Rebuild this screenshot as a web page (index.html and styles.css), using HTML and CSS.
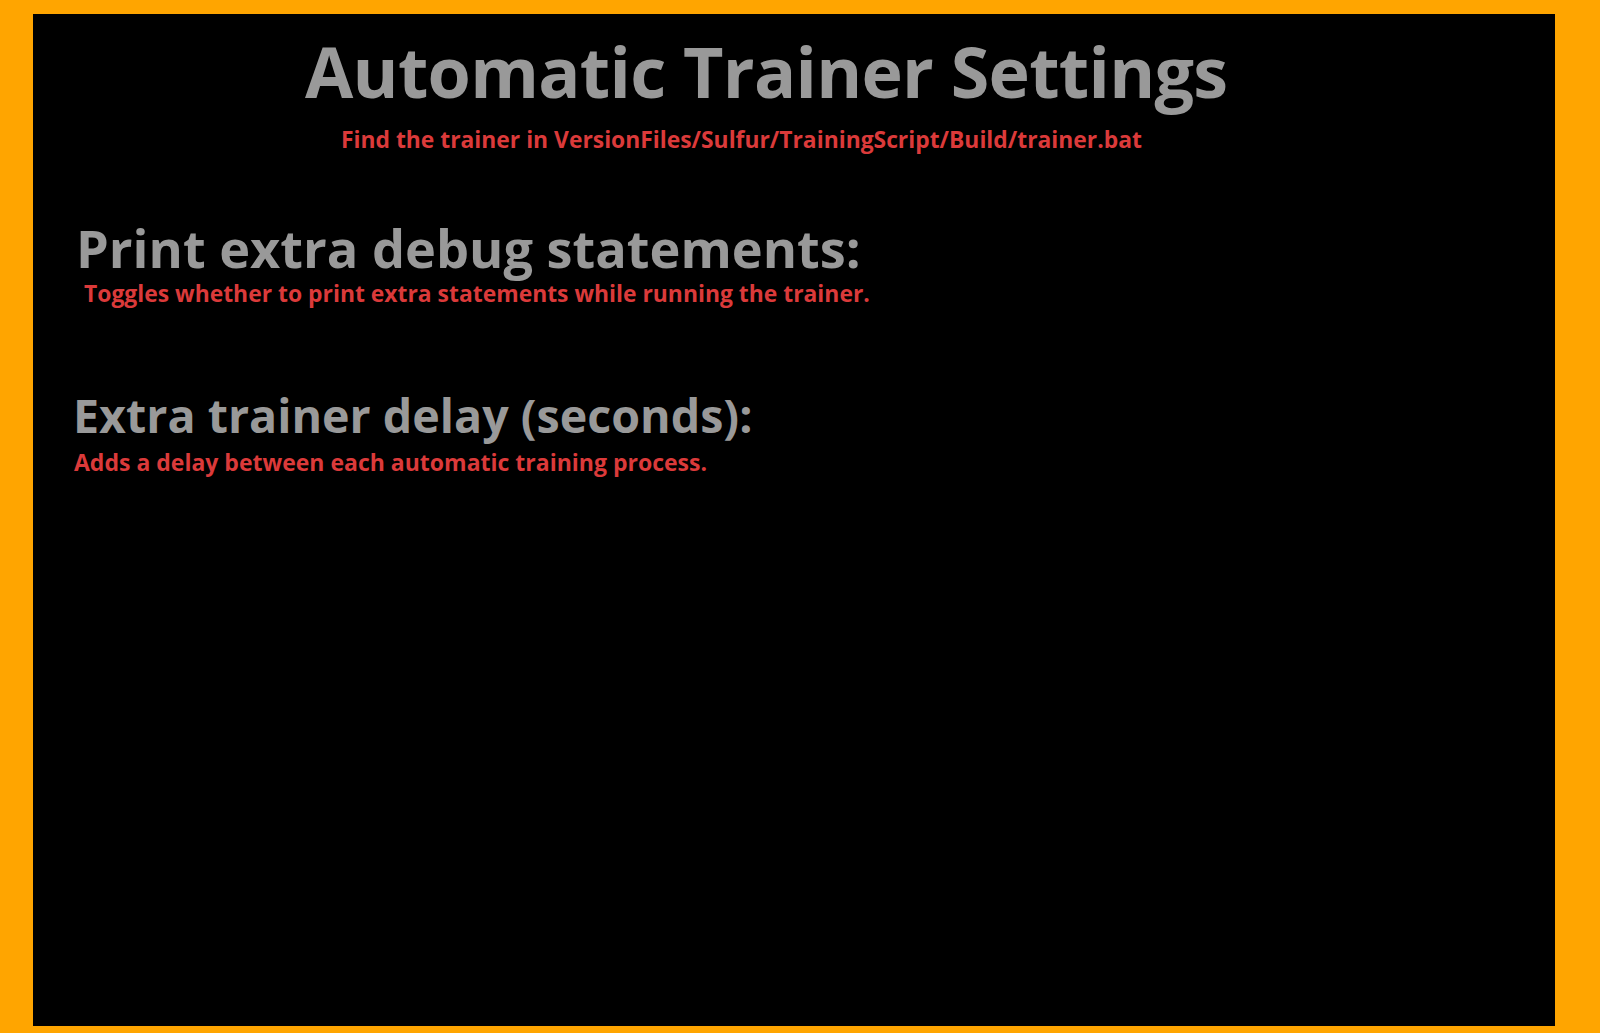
FILE: index.html
```html
<!DOCTYPE html>
<html lang="en">
<head>
<meta charset="utf-8">
<title>Automatic Trainer Settings</title>
<link rel="stylesheet" href="styles.css">
</head>
<body>
<main class="panel">
  <h1 class="title">Automatic Trainer Settings</h1>
  <p class="note note-path">Find the trainer in VersionFiles/Sulfur/TrainingScript/Build/trainer.bat</p>

  <section class="setting setting-debug">
    <h2 class="setting-label">Print extra debug statements:</h2>
    <p class="note note-debug">Toggles whether to print extra statements while running the trainer.</p>
  </section>

  <section class="setting setting-delay">
    <h2 class="setting-label label-delay">Extra trainer delay (seconds):</h2>
    <p class="note note-delay">Adds a delay between each automatic training process.</p>
  </section>
</main>
</body>
</html>
```

FILE: styles.css
```css
html, body {
  margin: 0;
  padding: 0;
}

body {
  background: #ffa500;
  width: 1600px;
  height: 1033px;
  overflow: hidden;
  font-family: "Open Sans", "Noto Sans", "Liberation Sans", sans-serif;
  font-weight: 700;
}

.panel {
  margin: 14px 45px 0 33px;
  height: 1012px;
  background: #000;
  display: flex;
  flex-direction: column;
  align-items: flex-start;
  padding-top: 22px;
  box-sizing: border-box;
}

.title {
  margin: 0 0 0 272px;
  font-size: 70px;
  line-height: 1;
  letter-spacing: -0.7px;
  color: #999999;
  font-weight: 700;
  white-space: nowrap;
}

.note {
  margin: 0;
  font-size: 23px;
  line-height: 1;
  color: #db3a3a;
  white-space: nowrap;
}

.note-path {
  margin: 23px 0 0 308px;
  font-size: 22.85px;
}

.setting {
  display: flex;
  flex-direction: column;
  align-items: flex-start;
}

.setting-label {
  margin: 0;
  font-size: 52.3px;
  line-height: 1;
  color: #999999;
  font-weight: 700;
  white-space: nowrap;
}

.setting-debug {
  margin: 70px 0 0 43px;
}

.note-debug {
  margin: 9px 0 0 8px;
  font-size: 22.88px;
}

.setting-delay {
  margin: 86px 0 0 40px;
}

.label-delay {
  font-size: 46.6px;
}

.note-delay {
  margin: 12.5px 0 0 1px;
}
```
